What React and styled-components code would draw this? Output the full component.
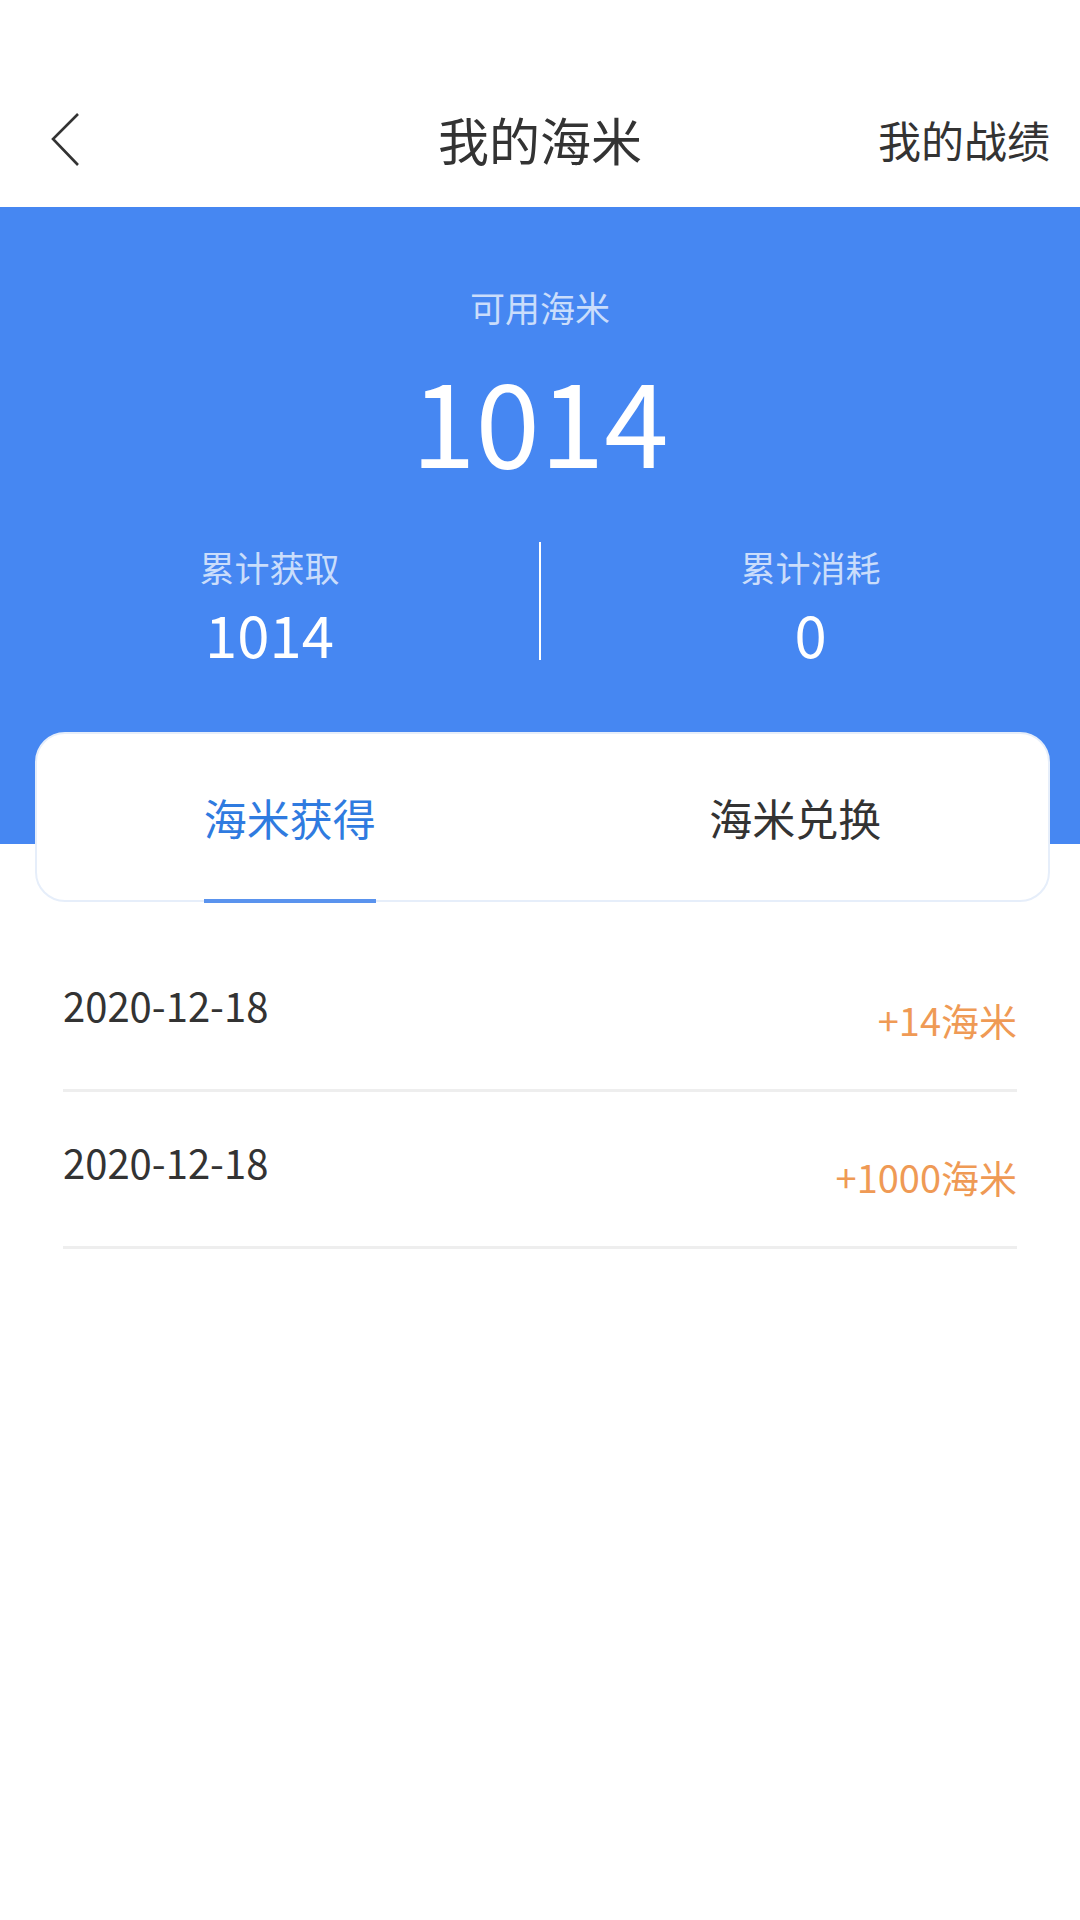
import React from "react";
import styled, { createGlobalStyle } from "styled-components";

const Global = createGlobalStyle`
  html, body { margin: 0; padding: 0; background: #fff; }
  body { font-family: "Noto Sans CJK SC", "Noto Sans", sans-serif; }
  * { box-sizing: border-box; }
`;

const Page = styled.div`
  width: 1080px;
  min-height: 1920px;
  background: #fff;
`;

const Header = styled.header`
  height: 207px;
  padding-top: 72px;
  display: grid;
  grid-template-columns: 1fr auto 1fr;
  align-items: center;
`;

const Back = styled.div`
  height: 135px;
  display: flex;
  align-items: center;
  padding-left: 50px;
`;

const Title = styled.h1`
  margin: 0;
  font-size: 51px;
  font-weight: 400;
  color: #333;
  line-height: 1;
`;

const HeaderLink = styled.div`
  justify-self: end;
  padding-right: 30px;
  font-size: 43px;
  color: #333;
  line-height: 1;
`;

const Hero = styled.section`
  background: #4687f2;
  height: 637px;
  padding-top: 82px;
  display: flex;
  flex-direction: column;
  align-items: center;
`;

const Label = styled.div`
  font-size: 35px;
  line-height: 1;
  color: rgba(255, 255, 255, 0.72);
`;

const BigNum = styled.div`
  margin-top: 35px;
  font-size: 116px;
  line-height: 1;
  color: #fff;
`;

const Stats = styled.div`
  margin-top: 67px;
  width: 100%;
  display: grid;
  grid-template-columns: 1fr 2px 1fr;
`;

const Stat = styled.div`
  display: flex;
  flex-direction: column;
  align-items: center;
  padding-top: 7px;
`;

const StatNum = styled.div`
  margin-top: 20px;
  font-size: 58px;
  line-height: 1;
  color: #fff;
`;

const Divider = styled.div`
  width: 2px;
  height: 118px;
  background: #fff;
`;

const Card = styled.div`
  margin: -112px 30px 0 35px;
  height: 170px;
  background: #fff;
  border: 2px solid #e6eefa;
  border-radius: 30px;
  display: grid;
  grid-template-columns: 1fr 1fr;
`;

const Tab = styled.div`
  display: flex;
  align-items: center;
  justify-content: center;
`;

const TabText = styled.span`
  position: relative;
  font-size: 43px;
  line-height: 1;
  color: ${(p) => (p.$active ? "#2f7be0" : "#333")};
`;

const Underline = styled.span`
  position: absolute;
  left: 0;
  right: 0;
  bottom: -64px;
  height: 4px;
  background: #5a93ee;
`;

const List = styled.div`
  padding: 33px 63px 0 63px;
`;

const Row = styled.div`
  display: flex;
  justify-content: space-between;
  align-items: flex-start;
  padding: 50px 0 50px;
  border-bottom: 3px solid #eeeeee;
`;

const DateText = styled.div`
  font-size: 40px;
  line-height: 1;
  color: #333;
`;

const Amount = styled.div`
  margin-top: 16px;
  font-size: 38px;
  line-height: 1;
  color: #ef9a55;
`;

const records = [
  { date: "2020-12-18", amount: "+14海米" },
  { date: "2020-12-18", amount: "+1000海米" },
];

export default function App() {
  return (
    <Page>
      <Global />
      <Header>
        <Back>
          <svg width="32" height="56" viewBox="0 0 32 56">
            <polyline points="28,2 3,27 28,53" fill="none" stroke="#333" strokeWidth="2.6" />
          </svg>
        </Back>
        <Title>我的海米</Title>
        <HeaderLink>我的战绩</HeaderLink>
      </Header>
      <Hero>
        <Label>可用海米</Label>
        <BigNum>1014</BigNum>
        <Stats>
          <Stat>
            <Label>累计获取</Label>
            <StatNum>1014</StatNum>
          </Stat>
          <Divider />
          <Stat>
            <Label>累计消耗</Label>
            <StatNum>0</StatNum>
          </Stat>
        </Stats>
      </Hero>
      <Card>
        <Tab>
          <TabText $active>
            海米获得
            <Underline />
          </TabText>
        </Tab>
        <Tab>
          <TabText>海米兑换</TabText>
        </Tab>
      </Card>
      <List>
        {records.map((r, i) => (
          <Row key={i}>
            <DateText>{r.date}</DateText>
            <Amount>{r.amount}</Amount>
          </Row>
        ))}
      </List>
    </Page>
  );
}
